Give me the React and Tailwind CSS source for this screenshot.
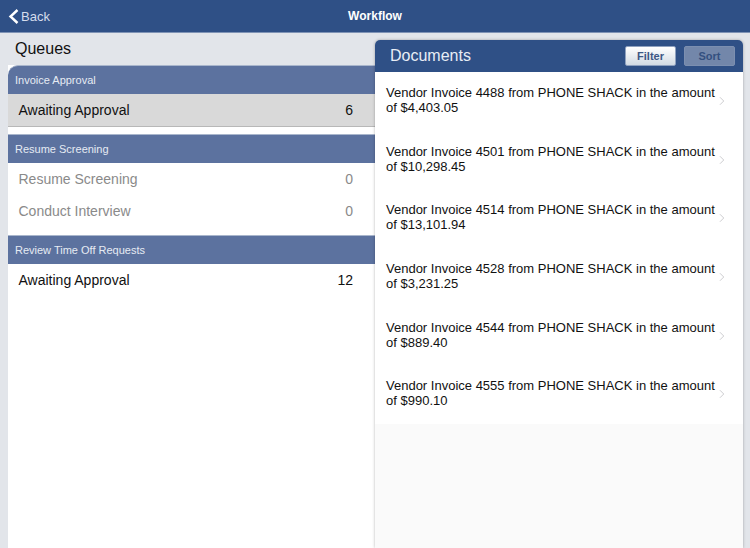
import React from 'react';
import { ChevronRight } from 'lucide-react';

const sans = { fontFamily: '"Liberation Sans", Arial, sans-serif' };

const queues = [
    {
        title: 'Invoice Approval',
        rows: [{ label: 'Awaiting Approval', count: 6, selected: true }],
    },
    {
        title: 'Resume Screening',
        rows: [
            { label: 'Resume Screening', count: 0, muted: true },
            { label: 'Conduct Interview', count: 0, muted: true },
        ],
    },
    {
        title: 'Review Time Off Requests',
        rows: [{ label: 'Awaiting Approval', count: 12 }],
    },
];

const documents = [
    ['4488', '$4,403.05'],
    ['4501', '$10,298.45'],
    ['4514', '$13,101.94'],
    ['4528', '$3,231.25'],
    ['4544', '$889.40'],
    ['4555', '$990.10'],
];

const QueueRow = ({ row }) => (
    <div
        className={`flex h-8 items-center justify-between pl-[10.5px] pr-[22px] text-[14px] ${
            row.selected ? 'h-[33px] border-b border-[#b8b8b8] bg-[#d9d9d9] text-[#111]' : ''
        } ${row.muted ? 'text-[#8a8a8a]' : 'text-[#111]'}`}
    >
        <span>{row.label}</span>
        <span>{row.count}</span>
    </div>
);

const QueueGroup = ({ group, first }) => (
    <div className={first ? 'mb-[7px]' : 'mb-2'}>
        <div
            className={`flex h-[29px] items-center border-t border-[#a9b6cc] bg-[#5c729f] pl-[7px] text-[11px] text-[#e6ebf3] ${
                first ? 'rounded-tl-[10px]' : ''
            }`}
        >
            {group.title}
        </div>
        {group.rows.map((row) => (
            <QueueRow key={row.label} row={row} />
        ))}
    </div>
);

const DocumentRow = ({ id, amount }) => (
    <div className="flex h-[58.6px] items-center bg-white pl-[11px] pr-[14px]">
        <p className="w-[330px] pb-[2px] text-[13px] leading-[15px] text-[#111]">
            Vendor Invoice {id} from PHONE SHACK in the amount of {amount}
        </p>
        <ChevronRight className="ml-auto h-[14px] w-[14px] text-[#c4c4c8]" strokeWidth={1.5} />
    </div>
);

export default function App() {
    return (
        <div className="flex h-[548px] w-[750px] flex-col overflow-hidden bg-[#e2e5ea]" style={sans}>
            <header className="relative flex h-[33px] shrink-0 items-center justify-center border-b border-[#7f93b5] bg-[#2f5086] text-white">
                <div className="absolute left-[7px] top-[7px] flex items-center text-[13px] text-[#d5dded]">
                    <svg width="13" height="17" viewBox="0 0 13 17" fill="none">
                        <path d="M10.5 2 L3.5 8.5 L10.5 15" stroke="white" strokeWidth="2.4" />
                    </svg>
                    <span className="ml-[1px]">Back</span>
                </div>
                <h1 className="text-[12px] font-bold">Workflow</h1>
            </header>

            <div className="flex min-h-0 flex-1">
                <aside className="flex w-[375px] shrink-0 flex-col pl-2">
                    <h2 className="flex h-[32px] shrink-0 items-center pl-[7px] text-[16px] text-[#111]">Queues</h2>
                    <div className="flex-1 bg-white">
                        {queues.map((group, i) => (
                            <QueueGroup key={group.title} group={group} first={i === 0} />
                        ))}
                    </div>
                </aside>

                <main className="mt-[7px] flex w-[368px] shrink-0 flex-col overflow-hidden rounded-t-[5px] bg-[#fafafa] shadow-[0_0_3px_rgba(0,0,0,0.3)]">
                    <div className="flex h-8 shrink-0 items-center justify-between bg-[#2f5086] pl-[15px] pr-2">
                        <h2 className="text-[16px] text-[#e8edf5]">Documents</h2>
                        <div className="flex gap-2">
                            <button className="h-[20px] w-[51px] rounded-[2px] border border-[#8fa1bf] bg-gradient-to-b from-white to-[#d3dbe4] text-[11px] font-bold text-[#3d5784]">
                                Filter
                            </button>
                            <button className="h-[20px] w-[51px] rounded-[2px] border border-[#7c8fb0] bg-[#7387aa] text-[11px] font-bold text-[#33507f]">
                                Sort
                            </button>
                        </div>
                    </div>
                    {documents.map(([id, amount]) => (
                        <DocumentRow key={id} id={id} amount={amount} />
                    ))}
                </main>
            </div>
        </div>
    );
}
